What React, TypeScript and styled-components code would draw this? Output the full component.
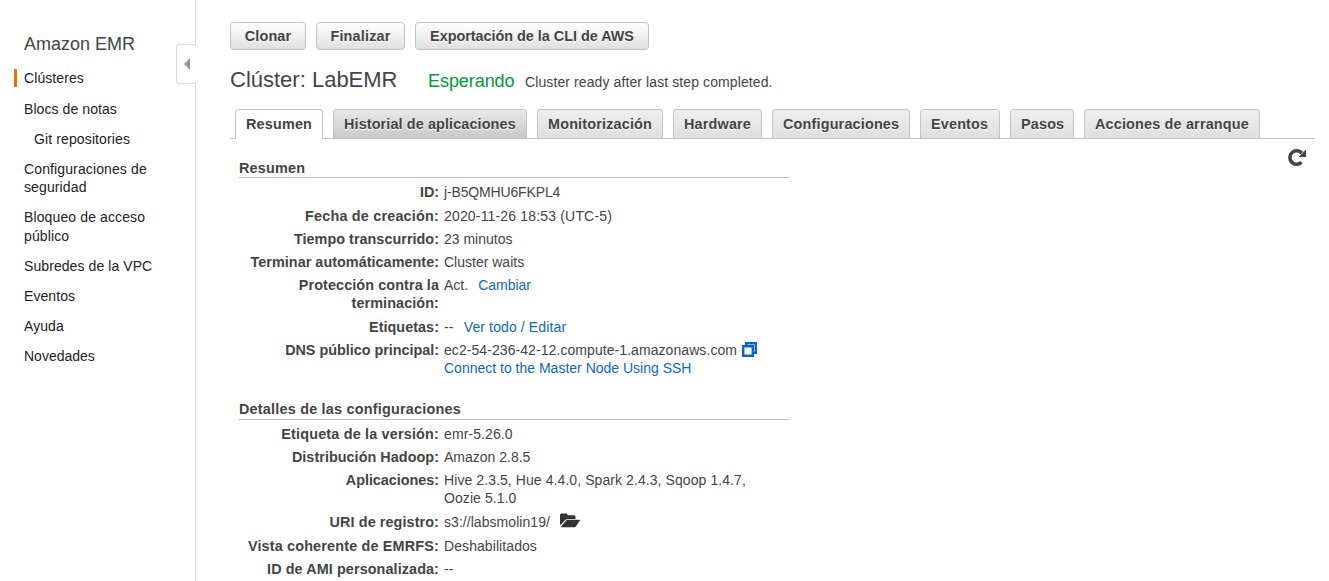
import React from "react";
import styled, { createGlobalStyle } from "styled-components";

const Global = createGlobalStyle`
  *, *::before, *::after { box-sizing: border-box; }
  body {
    margin: 0;
    background: #fff;
    color: #444;
    font: 14px/18px "Liberation Sans", Arial, Helvetica, sans-serif;
    overflow: hidden;
  }
`;

const Page = styled.div`
  display: flex;
  height: 581px;
  overflow: hidden;
`;

const Sidebar = styled.aside`
  position: relative;
  flex: none;
  width: 196px;
  padding: 34px 0 0 14px;
  border-right: 1px solid #d9d9d9;
`;

const Brand = styled.div`
  padding-left: 10px;
  font-size: 18px;
  line-height: 20px;
  height: 35px;
`;

const NavItem = styled.a<{ $active?: boolean; $nested?: boolean; $h?: number; $lh?: number; $ls?: number }>`
  display: block;
  height: ${(p) => p.$h ?? 30}px;
  padding-left: ${(p) => (p.$nested ? 20 : p.$active ? 7 : 10)}px;
  line-height: ${(p) => p.$lh ?? 18}px;
  letter-spacing: ${(p) => p.$ls ?? 0.08}px;
  color: #222;
  white-space: pre-line;
  ${(p) => p.$active && "border-left: 3px solid #e07700; margin-bottom: 13px;"}
`;

const Collapse = styled.button`
  position: absolute;
  top: 44px;
  right: -1px;
  width: 20px;
  height: 40px;
  padding: 0;
  display: flex;
  align-items: center;
  padding-left: 7px;
  background: #fff;
  border: 1px solid #d9d9d9;
  border-right: 0;
  border-radius: 4px 0 0 4px;
`;

const Main = styled.main`
  flex: 1;
  padding: 22px 14px 0 34px;
`;

const Actions = styled.div`
  display: flex;
  gap: 10px;
`;

const Button = styled.button<{ $w: number; $ls?: number }>`
  width: ${(p) => p.$w}px;
  height: 28px;
  padding: 0;
  font: bold 14.4px/18px "Liberation Sans", Arial, sans-serif;
  letter-spacing: ${(p) => p.$ls ?? 0.19}px;
  white-space: nowrap;
  color: #444;
  text-shadow: 0 1px 0 #fff;
  background: linear-gradient(#fff, #e0e0e0);
  border: 1px solid #c4c4c4;
  border-radius: 4px;
`;

const Heading = styled.div`
  display: flex;
  align-items: baseline;
  height: 59px;
  padding-top: 17px;
  line-height: 26px;
`;

const Title = styled.h1`
  margin: 0;
  width: 198px;
  font-size: 22px;
  font-weight: normal;
`;

const Status = styled.span`
  width: 97px;
  font-size: 18px;
  letter-spacing: -0.06px;
  color: #093;
`;

const StatusDetail = styled.span`
  letter-spacing: 0.1px;
`;

const Tabs = styled.div`
  display: flex;
  gap: 10px;
  height: 30px;
  padding-left: 5px;
  border-bottom: 1px solid #c4c4c4;
`;

const Tab = styled.div<{ $w: number; $state?: "active" | "hover"; $ls?: number }>`
  flex: none;
  width: ${(p) => p.$w}px;
  height: ${(p) => (p.$state === "active" ? 30 : 29)}px;
  padding: 5px 0 0 10px;
  font-size: 14.4px;
  font-weight: bold;
  letter-spacing: ${(p) => p.$ls ?? 0.18}px;
  white-space: nowrap;
  text-shadow: 0 1px 0 #fff;
  border: 1px solid #c4c4c4;
  border-bottom: 0;
  border-radius: 4px 4px 0 0;
  background: ${(p) =>
    p.$state === "active"
      ? "#fff"
      : p.$state === "hover"
      ? "linear-gradient(#e9e9e9, #c9c9c9)"
      : "linear-gradient(#efefef, #dedede)"};
`;

const Content = styled.div`
  display: flex;
  justify-content: space-between;
  padding: 0 9px;
`;

const Details = styled.div`
  width: 550px;
  padding-top: 19px;
`;

const SectionTitle = styled.h2<{ $gap?: number; $h?: number }>`
  margin: ${(p) => p.$gap ?? 0}px 0 5px;
  height: ${(p) => p.$h ?? 20}px;
  font-size: 14.4px;
  line-height: 20px;
  letter-spacing: 0.22px;
  border-bottom: 1px solid #bbb;
`;

const Row = styled.div<{ $h: number }>`
  display: grid;
  grid-template-columns: 200px 1fr;
  column-gap: 5px;
  height: ${(p) => p.$h}px;
`;

const Label = styled.div<{ $ls?: number }>`
  text-align: right;
  font-size: 14.4px;
  font-weight: bold;
  letter-spacing: ${(p) => p.$ls ?? 0.09}px;
  white-space: pre;
`;

const Value = styled.div<{ $ls?: number }>`
  letter-spacing: ${(p) => p.$ls ?? 0}px;
  white-space: pre-line;
`;

const Link = styled.a<{ $gap?: number; $ls?: number }>`
  color: #0f67c0;
  margin-left: ${(p) => p.$gap ?? 0}px;
  letter-spacing: ${(p) => p.$ls ?? 0}px;
`;

const Icon = styled.svg<{ $ml?: number; $va?: number }>`
  display: inline-block;
  flex: none;
  margin-left: ${(p) => p.$ml ?? 0}px;
  margin-bottom: -4px;
  vertical-align: ${(p) => p.$va ?? 0}px;
`;

const Refresh = styled.div`
  padding: 9px 0 0;
`;

export default function App() {
  return (
    <Page>
      <Global />
      <Sidebar>
        <Brand>Amazon EMR</Brand>
        <NavItem $active $h={18}>Clústeres</NavItem>
        <NavItem>Blocs de notas</NavItem>
        <NavItem $nested $ls={0.12}>Git repositories</NavItem>
        <NavItem $h={48} $ls={0.12}>{"Configuraciones de\nseguridad"}</NavItem>
        <NavItem $h={49} $lh={19} $ls={0.12}>{"Bloqueo de acceso\npúblico"}</NavItem>
        <NavItem>Subredes de la VPC</NavItem>
        <NavItem>Eventos</NavItem>
        <NavItem>Ayuda</NavItem>
        <NavItem $ls={0}>Novedades</NavItem>
        <Collapse aria-label="Contraer">
          <svg width="6" height="12" viewBox="0 0 6 12">
            <path d="M6 0v12L0 6z" fill="#999" />
          </svg>
        </Collapse>
      </Sidebar>
      <Main>
        <Actions>
          <Button $w={76}>Clonar</Button>
          <Button $w={89}>Finalizar</Button>
          <Button $w={234} $ls={-0.01}>Exportación de la CLI de AWS</Button>
        </Actions>
        <Heading>
          <Title>Clúster: LabEMR</Title>
          <Status>Esperando</Status>
          <StatusDetail>Cluster ready after last step completed.</StatusDetail>
        </Heading>
        <Tabs>
          <Tab $w={88} $state="active">Resumen</Tab>
          <Tab $w={194} $state="hover" $ls={0.12}>Historial de aplicaciones</Tab>
          <Tab $w={126}>Monitorización</Tab>
          <Tab $w={89}>Hardware</Tab>
          <Tab $w={138}>Configuraciones</Tab>
          <Tab $w={80}>Eventos</Tab>
          <Tab $w={64}>Pasos</Tab>
          <Tab $w={176}>Acciones de arranque</Tab>
        </Tabs>
        <Content>
          <Details>
            <SectionTitle>Resumen</SectionTitle>
            <Row $h={24}><Label $ls={-0.1}>ID:</Label><Value $ls={-0.15}>j-B5QMHU6FKPL4</Value></Row>
            <Row $h={23}><Label $ls={0.2}>Fecha de creación:</Label><Value $ls={0.17}>2020-11-26 18:53 (UTC-5)</Value></Row>
            <Row $h={23}><Label $ls={0.03}>Tiempo transcurrido:</Label><Value>23 minutos</Value></Row>
            <Row $h={23}><Label $ls={0.03}>Terminar automáticamente:</Label><Value>Cluster waits</Value></Row>
            <Row $h={42}>
              <Label>{"Protección contra la\nterminación:"}</Label>
              <Value>Act.<Link $gap={10}>Cambiar</Link></Value>
            </Row>
            <Row $h={23}>
              <Label $ls={0.04}>Etiquetas:</Label>
              <Value $ls={0.2}>--<Link $gap={10} $ls={0.12}>Ver todo / Editar</Link></Value>
            </Row>
            <Row $h={36}>
              <Label $ls={-0.02}>DNS público principal:</Label>
              <Value $ls={0.07}>
                ec2-54-236-42-12.compute-1.amazonaws.com
                <Icon $ml={5} $va={2} width="15" height="15" viewBox="0 0 15 15" fill="none" stroke="#0f62c4" strokeWidth="2.4">
                  <path d="M4.200 4V1.200h9.600v9.600h-3" />
                  <path d="M1.200 4.200h9.600v9.600H1.200z" />
                </Icon>
                <br />
                <Link>Connect to the Master Node Using SSH</Link>
              </Value>
            </Row>
            <SectionTitle $gap={22} $h={21}>Detalles de las configuraciones</SectionTitle>
            <Row $h={23}><Label $ls={0.18}>Etiqueta de la versión:</Label><Value $ls={0.1}>emr-5.26.0</Value></Row>
            <Row $h={23}><Label $ls={0.04}>Distribución Hadoop:</Label><Value>Amazon 2.8.5</Value></Row>
            <Row $h={42}>
              <Label $ls={-0.03}>Aplicaciones:</Label>
              <Value $ls={0.08}>{"Hive 2.3.5, Hue 4.4.0, Spark 2.4.3, Sqoop 1.4.7,\nOozie 5.1.0"}</Value>
            </Row>
            <Row $h={24}>
              <Label>URI de registro:</Label>
              <Value $ls={0.05}>
                s3://labsmolin19/
                <Icon $ml={10} $va={2} width="20" height="16" viewBox="0 0 20 16" fill="#333">
                  <path d="M0 12.500V2Q0 .500 1.300.500h5Q7.500.500 7.800 2.300H14q1.500 0 1.500 1.500V6H8Q6.400 6 5.300 7z" />
                  <path d="M8 6.800h11.300q1 0 .4.900L16 13.300q-.6 1-1.700 1H1.400q-.8 0-.3-.700L5.500 8.200Q6.500 6.800 8 6.800z" />
                </Icon>
              </Value>
            </Row>
            <Row $h={23}><Label $ls={0.17}>Vista coherente de EMRFS:</Label><Value $ls={0.08}>Deshabilitados</Value></Row>
            <Row $h={23}><Label>ID de AMI personalizada:</Label><Value>--</Value></Row>
          </Details>
          <Refresh>
            <svg width="19" height="19" viewBox="0 0 19 19" fill="none">
              <path d="M14.500 14.300A6.800 6.800 0 1 1 14.800 5" stroke="#444" strokeWidth="3.500" />
              <path d="M19 1.500v7.500H11.500z" fill="#444" />
            </svg>
          </Refresh>
        </Content>
      </Main>
    </Page>
  );
}
